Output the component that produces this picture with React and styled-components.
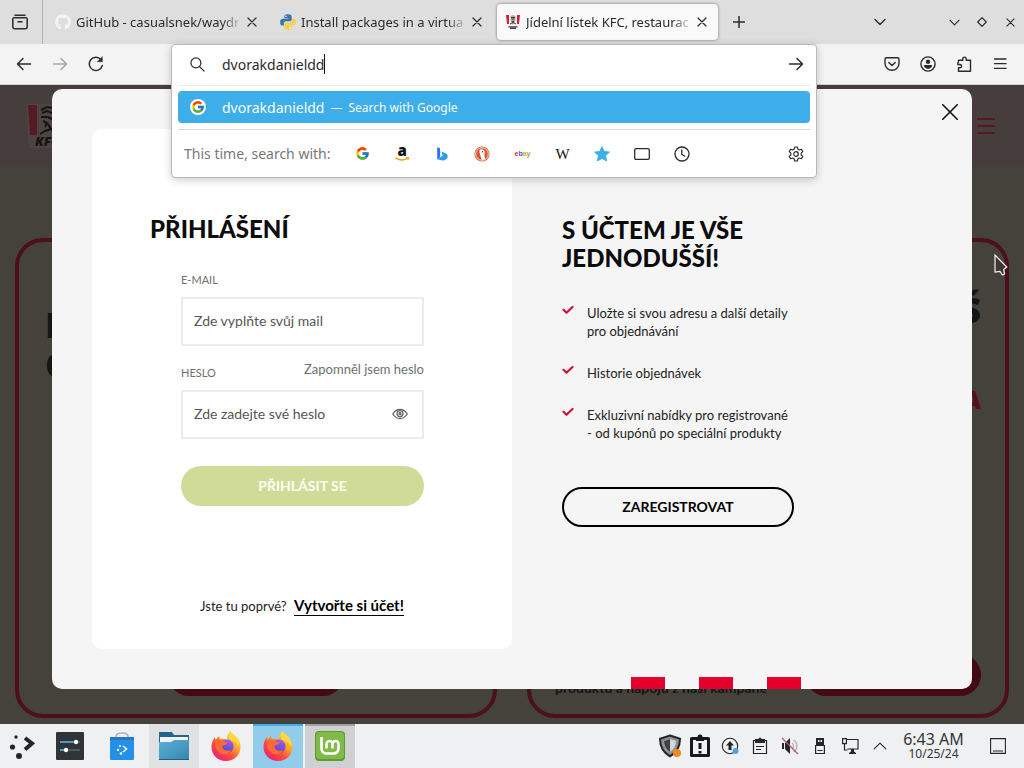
import React, { useState } from 'react'
import styled, { createGlobalStyle, css } from 'styled-components'
import { FaGithub } from 'react-icons/fa'
import { FcGoogle } from 'react-icons/fc'

const GlobalStyle = createGlobalStyle`
  * {
    box-sizing: border-box;
  }
  body {
    margin: 0;
    font-family: 'Noto Sans', 'Open Sans', sans-serif;
    font-size: 14px;
    color: #2b2b2f;
  }
  button,
  input {
    font: inherit;
    color: inherit;
  }
  button {
    padding: 0;
    border: none;
    background: transparent;
    cursor: pointer;
  }
  h1, h2, p, ul {
    margin: 0;
    padding: 0;
  }
  svg {
    display: block;
    flex: none;
  }
`

/* icons */

const Icon = ({ size = 16, box = 16, width = 1.3, children }) => (
  <svg
    width={size}
    height={size}
    viewBox={`0 0 ${box} ${box}`}
    fill="none"
    stroke="currentColor"
    strokeWidth={width}
    strokeLinecap="round"
    strokeLinejoin="round"
    aria-hidden="true"
  >
    {children}
  </svg>
)

const ViewIcon = () => (
  <Icon width={1.5}>
    <path d="M3 1.2h10" />
    <path d="M1.8 3.8h12.4M.8 4.5v8.3a2 2 0 0 0 2 2h10.4a2 2 0 0 0 2-2V4.5" />
    <path d="M6 7.8h4" />
  </Icon>
)

const CloseIcon = ({ size = 10, width = 1.2 }) => (
  <Icon size={size} box={10} width={width}>
    <path d="M1 1l8 8M9 1L1 9" />
  </Icon>
)

const PlusIcon = () => (
  <Icon size={12} box={12} width={1.5}>
    <path d="M6 .5v11M.5 6h11" />
  </Icon>
)

const ChevronIcon = ({ size = 12, up, width = 1.4 }) => (
  <Icon size={size} box={12} width={width}>
    <path d={up ? 'M1 8.5l5-5 5 5' : 'M1 3.5l5 5 5-5'} />
  </Icon>
)

const DiamondIcon = () => (
  <Icon size={10} box={10} width={1.2}>
    <path d="M5 .7L9.300 5 5 9.300.7 5z" />
  </Icon>
)

const ArrowIcon = ({ right }) => (
  <Icon width={1.5}>
    <path d={right ? 'M1.500 8h13M9 2.500L14.500 8 9 13.500' : 'M14.500 8h-13M7 2.500L1.500 8 7 13.500'} />
  </Icon>
)

const ReloadIcon = () => (
  <Icon width={1.5}>
    <path d="M14.300 9.500A6.600 6.600 0 1 1 13 3.700" />
    <path d="M14.300 1v4.700H9.600z" fill="currentColor" strokeWidth=".6" />
  </Icon>
)

const SearchIcon = () => (
  <Icon size={15}>
    <circle cx="6.3" cy="6.3" r="5.300" />
    <path d="M10.200 10.200l4.800 4.800" />
  </Icon>
)

const PocketIcon = () => (
  <Icon width={1.4}>
    <path d="M2.500 1.800h11A1.500 1.500 0 0 1 15 3.300v4a7 7 0 0 1-14 0v-4a1.500 1.500 0 0 1 1.500-1.500z" />
    <path d="M4.800 6.400L8 9.500l3.200-3.100" />
  </Icon>
)

const AccountIcon = () => (
  <Icon width={1.4}>
    <circle cx="8" cy="8" r="7.100" />
    <circle cx="8" cy="5.800" r="2.200" fill="currentColor" stroke="none" />
    <path d="M3.800 9h8.400c0 2.300-1.900 3.900-4.200 3.900S3.800 11.300 3.800 9z" fill="currentColor" stroke="none" />
  </Icon>
)

const PuzzleIcon = () => (
  <Icon width={1.4}>
    <path d="M2.500 6V4.300h4.300V2.800a1.700 1.700 0 0 1 3.400 0v1.500h4.300v10.900H2.500v-3.400h1.400a1.600 1.600 0 0 0 0-3.300H1.800V7" />
  </Icon>
)

const MenuIcon = () => (
  <Icon width={1.3}>
    <path d="M2.500 3h11.500M2.500 7.700h11.500M2.500 12.400h11.500" />
  </Icon>
)

const GearIcon = () => (
  <Icon width={1.2}>
    <path d="M6.700 1h2.600l.5 2.100 1.500.9 2.100-.7 1.300 2.300-1.500 1.500v1.800l1.500 1.500-1.300 2.300-2.100-.7-1.500.9-.5 2.100H6.700l-.5-2.100-1.500-.9-2.100.7-1.300-2.300 1.500-1.500V7.100L1.300 5.600l1.300-2.300 2.100.7 1.500-.9z" />
    <circle cx="8" cy="8" r="2.300" />
  </Icon>
)

const ClockIcon = () => (
  <Icon>
    <circle cx="8" cy="8" r="7" />
    <path d="M7.800 3.800V8.200l3 2" />
  </Icon>
)

const TabShapeIcon = () => (
  <Icon>
    <rect x=".7" y="2.600" width="14.600" height="10.800" rx="1.300" />
  </Icon>
)

const StarIcon = () => (
  <svg width="16" height="16" viewBox="0 0 16 16" aria-hidden="true">
    <path
      d="M8 .8l2.200 4.700 5.200.6-3.900 3.600 1.100 5.200L8 12.300l-4.600 2.600 1.100-5.200L.6 6.100l5.200-.6z"
      fill="#3daee9"
      stroke="#3daee9"
      strokeLinejoin="round"
    />
  </svg>
)

const PythonIcon = () => (
  <svg width="16" height="16" viewBox="0 0 16 16" aria-hidden="true">
    <path
      d="M7.900.2C4.700.2 4.300 1.600 4.300 2.400v1.800h3.800v.6H2.700C1 4.800.1 6.200.1 8.200s.9 3.400 2.300 3.400h1.500V9.500c0-1.300 1-2.200 2.300-2.200h3.600c1.100 0 1.900-.9 1.900-1.900v-3C11.700 1 10.300.2 7.900.2z"
      fill="#3d75a8"
    />
    <path
      d="M8.100 15.800c3.200 0 3.600-1.400 3.600-2.200v-1.800H7.900v-.6h5.400c1.700 0 2.600-1.400 2.600-3.400s-.9-3.400-2.300-3.400h-1.500v2.100c0 1.300-1 2.200-2.300 2.200H6.200c-1.100 0-1.900.9-1.900 1.900v3c0 1.400 1.400 2.200 3.800 2.200z"
      fill="#f5d04a"
    />
    <circle cx="6" cy="2.300" r=".8" fill="#fff" />
    <circle cx="10" cy="13.700" r=".8" fill="#fff" />
  </svg>
)

const KfcFavicon = () => (
  <svg width="16" height="16" viewBox="0 0 16 16" aria-hidden="true">
    <path d="M1 1h3v9H2zM12 1h3l-1 9h-2z" fill="#d2203c" />
    <path d="M5.500 2l2-1 3 1v4l-1 3-1.500 2-1.600-2-.9-3z" fill="#b3aaa6" />
    <path d="M6 3.500h4M6.500 5h3M7 7.500h2M5 10l3-1.500L11 10" stroke="#3a2d2d" strokeWidth=".9" fill="none" />
    <path d="M3.500 12.800h9M5 14.300h6" stroke="#4a3b3c" strokeWidth="1.200" />
  </svg>
)

const BingIcon = () => (
  <svg width="16" height="16" viewBox="0 0 16 16" aria-hidden="true">
    <path d="M3.200 1.300l2.900 1v8.800l-2.900 2.600z" fill="#2a72e8" />
    <path d="M7.300 5.300l5.100 2.500c1 .5 1.300 1.300 1.300 2.400-.1 2.200-2 4-4.200 4.200-1.700.2-4.600-.5-6.300-1.400l5.600-3.200z" fill="#2f9bf3" />
  </svg>
)

const DuckIcon = () => (
  <svg width="16" height="16" viewBox="0 0 16 16" aria-hidden="true">
    <circle cx="8" cy="8" r="7.600" fill="#d9562f" />
    <circle cx="8" cy="8" r="6.300" fill="none" stroke="#fff" strokeWidth=".8" />
    <path d="M6.200 3.400c2.700-.7 4.600.6 4.600 3.200 0 1-.4 1.700-.4 2.600l.8 4c-1.300.6-2.600.8-3.700.5L6 8c-.7-1.900-.9-3.500.2-4.600z" fill="#fff" />
    <circle cx="8.500" cy="5.800" r=".7" fill="#2d4f8e" />
    <path d="M9 7.500l3 .3-2.500 1z" fill="#f5b82e" />
  </svg>
)

const AmazonIcon = () => (
  <svg width="16" height="16" viewBox="0 0 16 16" aria-hidden="true">
    <text x="3.500" y="10" fontFamily="Open Sans, sans-serif" fontSize="15" fontWeight="800" fill="#111">
      a
    </text>
    <path d="M1.500 11.800c3.800 2.700 8.600 2.700 12 .6" stroke="#f19a1f" strokeWidth="1.500" fill="none" />
    <path d="M12 11.500h2.700l-.8 2.500" stroke="#f19a1f" fill="none" />
  </svg>
)

const EyeIcon = () => (
  <Icon size={16} width={1.300}>
    <path d="M.8 8C2.500 5 5 3.500 8 3.500S13.500 5 15.200 8c-1.700 3-4.200 4.500-7.200 4.500S2.500 11 .8 8z" />
    <circle cx="8" cy="7.600" r="3" />
    <circle cx="8" cy="7.600" r="1" fill="currentColor" />
  </Icon>
)

const CheckIcon = () => (
  <Icon size={12} box={12} width={2.200}>
    <path d="M1.500 5.800l3 2.900 6-5.700" />
  </Icon>
)

const DimLogo = () => (
  <svg width="60" height="44" viewBox="0 0 60 44" role="img" aria-label="KFC">
    <path d="M0 0h60l-3 44H3z" fill="#4c4543" />
    <path d="M2 1h9v30H4zM49 1h9l-2 30h-7z" fill="#571923" />
    <path
      d="M15 6l6-3 12 2M16 9l5-2 8 3M15 13h7l4 2M17 17l4 2-2 4M22 20l3 5M19 27l6-2 5 5M14 30l5-3"
      stroke="#171413"
      strokeWidth="2"
      fill="none"
    />
    <text x="9" y="42" fontFamily="Open Sans, sans-serif" fontStyle="italic" fontWeight="800" fontSize="13" fill="#171413">
      KFC
    </text>
  </svg>
)

const PointerIcon = () => (
  <svg width="14" height="22" viewBox="0 0 14 22" aria-hidden="true">
    <path d="M1 1v17l5-.5L8.500 21l2-1-.8-4.500L12.800 13z" fill="#3c3934" stroke="#f4f4f4" strokeWidth="1.200" />
  </svg>
)

const LauncherIcon = () => (
  <svg width="26" height="26" viewBox="0 0 26 26" aria-hidden="true">
    <circle cx="7" cy="4" r="1.700" fill="#232629" />
    <circle cx="3.500" cy="14" r="2.600" fill="#232629" />
    <circle cx="10" cy="23" r="3" fill="#232629" />
    <path d="M16 5l7 5.500-7 6" stroke="#232629" strokeWidth="4" fill="none" />
  </svg>
)

const SettingsAppIcon = () => (
  <svg width="28" height="28" viewBox="0 0 28 28" aria-hidden="true">
    <rect width="28" height="28" rx="1" fill="#2f3439" />
    <path d="M4 10h20M4 18h20" stroke="#56616a" strokeWidth="1.500" />
    <path d="M4 10h15M4 18h5" stroke="#4fb1dc" strokeWidth="1.500" />
    <circle cx="20" cy="10" r="2.200" fill="#fff" />
    <circle cx="10" cy="18" r="2.200" fill="#fff" />
  </svg>
)

const StoreIcon = () => (
  <svg width="26" height="28" viewBox="0 0 26 28" aria-hidden="true">
    <path d="M7 8V4.500C7 2 9 1 13 1s6 1 6 3.500V8" stroke="#a7b4bd" strokeWidth="1.500" fill="none" />
    <path d="M1 5h24v22a1 1 0 0 1-1 1H2a1 1 0 0 1-1-1z" fill="#2490ea" />
    <path d="M1 5h24v3H1z" fill="#2378c4" />
    <circle cx="11" cy="14" r="1" fill="#fff" />
    <circle cx="9" cy="18" r="1.200" fill="#fff" />
    <circle cx="12" cy="21.500" r="1.300" fill="#fff" />
    <path d="M14 14l3.500 3-3.500 3" stroke="#fff" strokeWidth="1.600" fill="none" />
  </svg>
)

const FolderIcon = () => (
  <svg width="30" height="28" viewBox="0 0 30 28" aria-hidden="true">
    <defs>
      <linearGradient id="folder" x1="0" y1="0" x2="1" y2="1">
        <stop offset="0" stopColor="#5fb0d5" />
        <stop offset="1" stopColor="#3487b0" />
      </linearGradient>
    </defs>
    <path d="M0 0h13l2 3h15v10H0z" fill="#22678a" />
    <path d="M1 5h28v6H1z" fill="#f3f3f3" />
    <path d="M0 10h12l3-2h15v19H0z" fill="url(#folder)" />
    <path d="M0 27h30v1H0z" fill="#1f5f80" />
  </svg>
)

const FirefoxIcon = ({ id }) => (
  <svg width="32" height="32" viewBox="0 0 32 32" aria-hidden="true">
    <defs>
      <linearGradient id={`${id}-fire`} x1=".85" y1=".1" x2=".2" y2=".95">
        <stop offset="0" stopColor="#ffe14a" />
        <stop offset=".35" stopColor="#ffa12b" />
        <stop offset=".65" stopColor="#ff4b3e" />
        <stop offset="1" stopColor="#e5217a" />
      </linearGradient>
      <linearGradient id={`${id}-orb`} x1=".7" y1="0" x2=".3" y2="1">
        <stop offset="0" stopColor="#a25bf0" />
        <stop offset="1" stopColor="#4c45c4" />
      </linearGradient>
    </defs>
    <path
      d="M20.500 1c1 2.400 4 4 5.800 6 3 3.200 4.400 6.700 4.200 10.500C30.100 25.400 24 31 16 31S1.500 25 1.500 17c0-4 1.200-6.600 3.300-10l.8 2.800L9 6l1 3.200c3-.8 5.300-.5 7 .8C17 6.500 18 3 20.500 1z"
      fill={`url(#${id}-fire)`}
    />
    <circle cx="16.500" cy="16.500" r="7" fill={`url(#${id}-orb)`} />
    <path d="M5 12c3-2.300 6-2.600 9.500-.5 1 .6 2.200.8 3.500.8-.7 1.600-2 2.500-4 2.700-1.600.2-2 1.400-1.300 3 1.300 2.600 5 3.600 8.500 1.700-1.400 4.600-8 6.500-12.500 2.300C5.800 19.300 4.500 16 5 12z" fill="#ff6a32" />
    <path d="M20.500 1c1 2.400 4 4 5.800 6 2.600 3 3.300 6 2.500 9.500C27 11 23 12 19.500 9c-1.500-2.500-.5-6 1-8z" fill="#ffd83d" />
  </svg>
)

const MintIcon = () => (
  <svg width="30" height="30" viewBox="0 0 30 30" aria-hidden="true">
    <rect width="30" height="30" rx="4" fill="#5f9c35" />
    <rect x="1" y="1" width="28" height="27" rx="4" fill="#82ba4a" />
    <path
      d="M6.500 6v11.500a5 5 0 0 0 5 5h7a5 5 0 0 0 5-5V13a3 3 0 0 0-6 0v4.500M17.500 13a3 3 0 0 0-6 0v4.500"
      stroke="#fff"
      strokeWidth="2.600"
      fill="none"
    />
  </svg>
)

const ShieldIcon = () => (
  <svg width="24" height="24" viewBox="0 0 24 24" aria-hidden="true">
    <path d="M12 1.500l10 3.300c0 8-3 13.500-10 17.500C5 18.300 2 12.800 2 4.800z" fill="#8d9193" stroke="#232629" strokeWidth="2" />
    <path d="M12 5l6 2c-.3 5-2 8-6 11-4-3-5.700-6-6-11z" fill="#d5d5d5" />
    <path d="M12 5v13c-4-3-5.700-6-6-11z" fill="#3e4245" />
    <circle cx="19" cy="19" r="4" fill="#f08a1c" />
  </svg>
)

const AlertBoardIcon = () => (
  <svg width="22" height="24" viewBox="0 0 22 24" aria-hidden="true">
    <path d="M2.500 4.500h17v17h-17z" fill="none" stroke="#17191b" strokeWidth="3" strokeLinejoin="round" />
    <path d="M7 3.500h8V7H7z" fill="#17191b" />
    <circle cx="11" cy="3" r="2.500" fill="#17191b" />
    <path d="M11 9v6M11 17v2.500" stroke="#17191b" strokeWidth="3" />
  </svg>
)

const UpdateIcon = () => (
  <svg width="18" height="18" viewBox="0 0 18 18" aria-hidden="true">
    <circle cx="9" cy="9" r="7.700" fill="none" stroke="#232629" strokeWidth="1.100" />
    <path d="M9 4l4 4.500h-2.500V13h-3V8.500H5z" fill="#232629" />
    <circle cx="14.500" cy="14" r="3" fill="#4aa3e6" />
  </svg>
)

const ClipboardIcon = () => (
  <svg width="16" height="18" viewBox="0 0 16 18" aria-hidden="true">
    <path d="M1.500 3.500h13v13h-13z" fill="none" stroke="#232629" strokeWidth="1.200" />
    <path d="M3 2h3.500a1.500 1.500 0 0 1 3 0H13v4H3z" fill="#232629" />
    <path d="M4 9.500h8M4 12.500h5" stroke="#232629" strokeWidth="1.200" />
  </svg>
)

const MutedIcon = () => (
  <svg width="18" height="18" viewBox="0 0 18 18" aria-hidden="true">
    <path d="M1 6h2v6H1zM4 6l5-5v16l-5-5z" fill="#232629" />
    <path d="M11 6c2 1.500 2 4.500 0 6M12.500 3c4.500 2.500 4.500 9.500 0 12" stroke="#a9abac" strokeWidth="1.200" fill="none" />
    <path d="M1 1l16 16" stroke="#b65a66" strokeWidth="1.200" />
  </svg>
)

const UsbIcon = () => (
  <svg width="12" height="18" viewBox="0 0 12 18" aria-hidden="true">
    <path d="M2 1h8v7H2z" fill="#232629" />
    <path d="M4 3h1.500v2H4zM6.500 3H8v2H6.500z" fill="#eff0f1" />
    <path d="M1.600 8.500h8.800v8H1.600zM3.500 13.500h5" fill="none" stroke="#232629" strokeWidth="1.200" />
  </svg>
)

const NetworkIcon = () => (
  <svg width="18" height="18" viewBox="0 0 18 18" aria-hidden="true">
    <path d="M6 2.500h11v9.500H6.500" fill="none" stroke="#232629" strokeWidth="1.200" />
    <path d="M1.600 1.600h3.800v5H1.600zM3.500 6.600V13h3" fill="none" stroke="#232629" strokeWidth="1.200" />
    <path d="M10 12h3v2.500l2 1.500v1H8v-1l2-1.500z" fill="#232629" />
  </svg>
)

const DesktopIcon = () => (
  <svg width="16" height="16" viewBox="0 0 16 16" aria-hidden="true">
    <path d="M.6.6h14.800v14.800H.6zM3 13h10" fill="none" stroke="#232629" strokeWidth="1.100" />
  </svg>
)

/* data */

const TABS = [
  { title: 'GitHub - casualsnek/waydr', icon: <FaGithub size={16} color="#f4f4f4" /> },
  { title: 'Install packages in a virtua', icon: <PythonIcon /> },
  { title: 'Jídelní lístek KFC, restaurac', icon: <KfcFavicon />, active: true }
]

const ENGINES = [
  { name: 'Google', icon: <FcGoogle size={15} /> },
  { name: 'Amazon', icon: <AmazonIcon /> },
  { name: 'Bing', icon: <BingIcon /> },
  { name: 'DuckDuckGo', icon: <DuckIcon /> },
  { name: 'eBay', ebay: true },
  { name: 'Wikipedia', wiki: true },
  { name: 'Bookmarks', icon: <StarIcon /> },
  { name: 'Tabs', icon: <TabShapeIcon /> },
  { name: 'History', icon: <ClockIcon /> }
]

const BENEFITS = [
  'Uložte si svou adresu a další detaily pro objednávání',
  'Historie objednávek',
  'Exkluzivní nabídky pro registrované - od kupónů po speciální produkty'
]

const TASKS = [
  { name: 'System Settings', icon: <SettingsAppIcon /> },
  { name: 'Discover', icon: <StoreIcon /> },
  { name: 'Files', icon: <FolderIcon />, state: 'open' },
  { name: 'Firefox', icon: <FirefoxIcon id="ff" /> },
  { name: 'Firefox window', icon: <FirefoxIcon id="ffw" />, state: 'active' },
  { name: 'Mint', icon: <MintIcon />, state: 'running' }
]

const TRAY = [
  { name: 'Firewall', icon: <ShieldIcon /> },
  { name: 'Reports', icon: <AlertBoardIcon /> },
  { name: 'Updates', icon: <UpdateIcon /> },
  { name: 'Clipboard', icon: <ClipboardIcon /> },
  { name: 'Volume', icon: <MutedIcon /> },
  { name: 'Devices', icon: <UsbIcon /> },
  { name: 'Network', icon: <NetworkIcon /> },
  { name: 'More', icon: <ChevronIcon size={14} up width={1} /> }
]

const App = () => {
  const [query, setQuery] = useState('dvorakdanieldd')
  const [showPassword, setShowPassword] = useState(false)

  return (
    <Screen>
      <GlobalStyle />
      <TabBar>
        <ViewButton aria-label="Firefox View">
          <ViewIcon />
        </ViewButton>
        <Tabs>
          {TABS.map(tab => (
            <Tab key={tab.title} $active={tab.active}>
              {tab.icon}
              <TabTitle>{tab.title}</TabTitle>
              <TabClose aria-label="Close tab">
                <CloseIcon />
              </TabClose>
            </Tab>
          ))}
          <NewTab aria-label="New tab">
            <PlusIcon />
          </NewTab>
        </Tabs>
        <ListTabs aria-label="List all tabs">
          <ChevronIcon />
        </ListTabs>
        <WindowButton aria-label="Minimize">
          <ChevronIcon size={11} width={1.2} />
        </WindowButton>
        <WindowButton aria-label="Maximize">
          <DiamondIcon />
        </WindowButton>
        <WindowButton aria-label="Close window">
          <CloseIcon size={9} />
        </WindowButton>
      </TabBar>

      <Toolbar>
        <NavGroup>
          <ToolButton aria-label="Back">
            <ArrowIcon />
          </ToolButton>
          <ToolButton aria-label="Forward" disabled>
            <ArrowIcon right />
          </ToolButton>
          <ToolButton aria-label="Reload">
            <ReloadIcon />
          </ToolButton>
        </NavGroup>
        <UrlBar>
          <UrlPanel>
            <UrlRow>
              <SearchIcon />
              <UrlField>
                <UrlInput
                  aria-label="Search or enter address"
                  value={query}
                  onChange={e => setQuery(e.target.value)}
                />
                <Caret />
              </UrlField>
              <ArrowIcon right />
            </UrlRow>
            <Results>
              <Result>
                <ResultLogo>
                  <FcGoogle size={14} />
                </ResultLogo>
                <span>{query}</span>
                <ResultHint>—</ResultHint>
                <ResultHint>Search with Google</ResultHint>
              </Result>
            </Results>
            <Engines>
              <EnginesLabel>This time, search with:</EnginesLabel>
              {ENGINES.map(engine => (
                <Engine key={engine.name} aria-label={engine.name}>
                  {engine.icon}
                  {engine.ebay && (
                    <Ebay>
                      <b>e</b>
                      <b>b</b>
                      <b>a</b>
                      <b>y</b>
                    </Ebay>
                  )}
                  {engine.wiki && <Wiki>W</Wiki>}
                </Engine>
              ))}
              <EngineSettings aria-label="Search settings">
                <GearIcon />
              </EngineSettings>
            </Engines>
          </UrlPanel>
        </UrlBar>
        <ActionGroup>
          <ToolButton aria-label="Save to Pocket">
            <PocketIcon />
          </ToolButton>
          <ToolButton aria-label="Account">
            <AccountIcon />
          </ToolButton>
          <ToolButton aria-label="Extensions">
            <PuzzleIcon />
          </ToolButton>
          <ToolButton aria-label="Menu">
            <MenuIcon />
          </ToolButton>
        </ActionGroup>
      </Toolbar>

      <Viewport>
        <Backdrop aria-hidden="true">
          <SiteHeader>
            <DimLogo />
            <Burger>
              <i />
              <i />
              <i />
            </Burger>
          </SiteHeader>
          <Promos>
            <Promo>
              <PromoTitle>
                K<br />O
              </PromoTitle>
              <PromoFooter $center>
                <PromoPill />
              </PromoFooter>
            </Promo>
            <Promo $right>
              <PromoTitle>Š</PromoTitle>
              <PromoPrice>A</PromoPrice>
              <PromoFooter>
                <PromoNote>produktů a nápojů z naší kampaně</PromoNote>
                <PromoPill />
              </PromoFooter>
            </Promo>
          </Promos>
        </Backdrop>

        <Modal role="dialog" aria-label="Přihlášení">
          <LoginCard onSubmit={e => e.preventDefault()}>
            <Title as="h1">PŘIHLÁŠENÍ</Title>
            <Fields>
              <LabelRow>
                <Label htmlFor="email">E-MAIL</Label>
              </LabelRow>
              <Field>
                <Input id="email" type="email" placeholder="Zde vyplňte svůj mail" />
              </Field>
              <LabelRow $short>
                <Label htmlFor="password">HESLO</Label>
                <Forgot href="#heslo">Zapomněl jsem heslo</Forgot>
              </LabelRow>
              <Field>
                <Input
                  id="password"
                  type={showPassword ? 'text' : 'password'}
                  placeholder="Zde zadejte své heslo"
                />
                <EyeButton
                  type="button"
                  aria-label="Zobrazit heslo"
                  onClick={() => setShowPassword(!showPassword)}
                >
                  <EyeIcon />
                </EyeButton>
              </Field>
              <Submit type="submit">PŘIHLÁSIT SE</Submit>
            </Fields>
            <FirstTime>
              Jste tu poprvé? <CreateLink href="#ucet">Vytvořte si účet!</CreateLink>
            </FirstTime>
          </LoginCard>

          <Aside>
            <Title>
              S ÚČTEM JE VŠE
              <br />
              JEDNODUŠŠÍ!
            </Title>
            <Benefits>
              {BENEFITS.map(text => (
                <Benefit key={text}>
                  <CheckIcon />
                  <span>{text}</span>
                </Benefit>
              ))}
            </Benefits>
            <Register type="button">ZAREGISTROVAT</Register>
            <Stripes>
              <i />
              <i />
              <i />
            </Stripes>
          </Aside>

          <ModalClose aria-label="Zavřít">
            <CloseIcon size={18} width={0.9} />
          </ModalClose>
        </Modal>
        <Pointer>
          <PointerIcon />
        </Pointer>
      </Viewport>

      <Taskbar>
        <Launcher aria-label="Application launcher">
          <LauncherIcon />
        </Launcher>
        {TASKS.map(task => (
          <Task key={task.name} aria-label={task.name} $state={task.state}>
            {task.icon}
          </Task>
        ))}
        <Tray>
          {TRAY.map(item => (
            <TrayButton key={item.name} aria-label={item.name}>
              {item.icon}
            </TrayButton>
          ))}
        </Tray>
        <Clock>
          <Time>6:43 AM</Time>
          <DateText>10/25/24</DateText>
        </Clock>
        <ShowDesktop aria-label="Show desktop">
          <DesktopIcon />
        </ShowDesktop>
      </Taskbar>
    </Screen>
  )
}

const centered = css`
  display: flex;
  align-items: center;
  justify-content: center;
`

const Screen = styled.div`
  display: flex;
  flex-direction: column;
  min-height: 100vh;
`

const TabBar = styled.header`
  display: flex;
  align-items: center;
  height: 44px;
  background: #dedede;
`

const ViewButton = styled.button`
  ${centered}
  flex: none;
  width: 43px;
  height: 44px;
  padding-right: 2px;
  border-right: 1px solid #b4b4b6;
`

const Tabs = styled.div`
  display: flex;
  align-items: center;
  flex: 1;
  gap: 4px;
  min-width: 0;
  padding-left: 4px;
`

const Tab = styled.div`
  display: flex;
  align-items: center;
  flex: 0 1 221px;
  min-width: 0;
  height: 36px;
  padding: 0 9px 0 8px;
  border-radius: 4px;
  ${props =>
    props.$active &&
    css`
      background: #f9f9fa;
      box-shadow: 0 0 3px rgba(0, 0, 0, 0.5);
    `}
`

const TabTitle = styled.span`
  flex: 1;
  min-width: 0;
  margin-left: 5px;
  overflow: hidden;
  white-space: nowrap;
  font-size: 13px;
  line-height: 20px;
  mask-image: linear-gradient(to right, #000 calc(100% - 20px), transparent);
`

const TabClose = styled.button`
  ${centered}
  width: 14px;
  height: 20px;
  margin-left: 3px;
`

const NewTab = styled.button`
  ${centered}
  width: 34px;
  height: 34px;
`

const WindowButton = styled.button`
  ${centered}
  flex: none;
  width: 28px;
  height: 28px;
`

const ListTabs = styled(WindowButton)`
  margin-right: 46px;
`

const Toolbar = styled.div`
  display: flex;
  height: 41px;
  background: #f3f3f4;
  border-bottom: 1px solid #d4d4d4;
`

const NavGroup = styled.div`
  display: flex;
  align-items: center;
  flex: none;
  width: 171px;
  padding-left: 6px;
`

const ToolButton = styled.button`
  ${centered}
  width: 36px;
  height: 32px;
  &:disabled {
    color: #a5a5a8;
  }
`

const ActionGroup = styled(NavGroup)`
  justify-content: flex-end;
  width: 207px;
  padding: 0 6px 0 0;
`

const UrlBar = styled.div`
  position: relative;
  flex: 1;
  min-width: 0;
`

/* opens over the page, so it leaves the toolbar's flow */
const UrlPanel = styled.div`
  position: absolute;
  top: 0;
  left: 0;
  right: 0;
  z-index: 10;
  background: #fff;
  border: 1px solid #b9b9bb;
  border-radius: 4px;
  box-shadow: 0 2px 8px rgba(0, 0, 0, 0.2);
`

const UrlRow = styled.div`
  display: flex;
  align-items: center;
  height: 40px;
  padding: 0 12px 2px 18px;
`

const UrlField = styled.div`
  display: flex;
  align-items: center;
  flex: 1;
  min-width: 0;
  margin-left: 17px;
`

const UrlInput = styled.input`
  field-sizing: content;
  min-width: 0;
  max-width: 100%;
  padding: 0;
  border: none;
  outline: none;
  background: transparent;
`

const Caret = styled.span`
  width: 1px;
  height: 20px;
  background: #111;
`

const Results = styled.div`
  margin: 0 6px;
  padding: 5px 0 6px;
  border-top: 1px solid #ececec;
  border-bottom: 1px solid #d8d8da;
`

const Result = styled.div`
  display: flex;
  align-items: center;
  height: 32px;
  padding-left: 12px;
  border-radius: 4px;
  background: #3daee9;
  color: #f6fcff;
`

const ResultLogo = styled.span`
  ${centered}
  width: 16px;
  height: 16px;
  margin-right: 16px;
  border-radius: 50%;
  background: #fff;
`

const ResultHint = styled.span`
  margin-left: 6px;
  font-size: 12px;
`

const Engines = styled.div`
  display: flex;
  align-items: center;
  height: 47px;
  padding: 0 2px 0 12px;
`

const EnginesLabel = styled.span`
  margin-right: 12px;
  color: #77777b;
  white-space: nowrap;
`

const Engine = styled.button`
  ${centered}
  width: 40px;
  height: 32px;
`

const EngineSettings = styled.button`
  ${centered}
  width: 36px;
  height: 32px;
  margin-left: auto;
`

const Ebay = styled.span`
  font: 7px/16px 'Liberation Sans', Arial, sans-serif;
  b:nth-child(1) {
    color: #d8333a;
  }
  b:nth-child(2) {
    color: #2b5fd0;
  }
  b:nth-child(3) {
    color: #dca62a;
  }
  b:nth-child(4) {
    color: #8cb23a;
  }
`

const Wiki = styled.span`
  font: 15px/16px 'Liberation Serif', 'Times New Roman', serif;
  color: #111;
`

const Viewport = styled.main`
  position: relative;
  display: grid;
  flex: 1;
  overflow: hidden;
  font-family: Lato, 'Open Sans', sans-serif;
  background: #45423b;
  & > * {
    grid-area: 1 / 1;
  }
`

const Backdrop = styled.div`
  display: flex;
  flex-direction: column;
`

const SiteHeader = styled.div`
  display: flex;
  align-items: center;
  justify-content: space-between;
  height: 82px;
  padding: 0 29px 0 26px;
  background: #463e3d;
`

const Burger = styled.div`
  display: flex;
  flex-direction: column;
  gap: 5px;
  width: 18px;
  i {
    height: 2px;
    background: #5c1622;
  }
`

const Promos = styled.div`
  display: grid;
  grid-template-columns: 1fr 1fr;
  gap: 30px;
  flex: 1;
  padding: 71px 15px 6px;
`

const Promo = styled.div`
  display: flex;
  flex-direction: column;
  padding: ${props => (props.$right ? '48px 24px 18px' : '63px 26px 18px')};
  border: 4px solid #4d0f1b;
  border-radius: 28px;
  text-align: ${props => (props.$right ? 'right' : 'left')};
`

const PromoTitle = styled.p`
  font: 800 36px/40px 'Open Sans', sans-serif;
  color: #151513;
`

const PromoPrice = styled.p`
  margin-top: 58px;
  font: 800 24px/24px 'Open Sans', sans-serif;
  color: #5a0f1d;
`

const PromoFooter = styled.div`
  display: flex;
  align-items: flex-end;
  justify-content: ${props => (props.$center ? 'center' : 'space-between')};
  margin-top: auto;
`

const PromoPill = styled.div`
  width: 176px;
  height: 42px;
  border-radius: 21px;
  background: #430914;
`

const PromoNote = styled.p`
  font-size: 14px;
  line-height: 16px;
  font-weight: 700;
  color: #151513;
`

const Modal = styled.section`
  position: relative;
  display: grid;
  grid-template-columns: 35fr 34fr;
  align-self: start;
  min-height: 600px;
  margin: 4px 52px 35px;
  padding: 0 52px 0 40px;
  border-radius: 10px;
  background: #f5f5f5;
  color: #222;
`

const LoginCard = styled.form`
  display: flex;
  flex-direction: column;
  min-height: 520px;
  margin: 40px 0;
  padding: 86px 58px 33px;
  border-radius: 10px;
  background: #fff;
`

const Title = styled.h2`
  font-size: 24px;
  line-height: 28px;
  font-weight: 900;
  color: #0c0c0c;
`

const Fields = styled.div`
  display: flex;
  flex-direction: column;
  padding: 0 30px 0 31px;
`

const LabelRow = styled.div`
  display: flex;
  align-items: flex-end;
  justify-content: space-between;
  height: ${props => (props.$short ? '44px' : '54px')};
  padding-bottom: 9px;
`

const Label = styled.label`
  font-size: 11px;
  line-height: 16px;
  color: #6f6f6f;
`

const Forgot = styled.a`
  font-size: 13px;
  line-height: 24px;
  color: #6f6f6f;
  text-decoration: none;
`

const Field = styled.div`
  display: flex;
  align-items: center;
  height: 49px;
  padding: 0 14px 2px 11px;
  border: 2px solid #ececec;
`

const Input = styled.input`
  flex: 1;
  min-width: 0;
  padding: 0;
  border: none;
  outline: none;
  background: transparent;
  font-size: 14px;
  &::placeholder {
    color: #555;
    opacity: 1;
  }
`

const EyeButton = styled.button`
  color: #666;
`

const Submit = styled.button`
  height: 40px;
  margin-top: 27px;
  padding-bottom: 2px;
  border-radius: 20px;
  background: #d1db98;
  color: #fdfef6;
  font-size: 14px;
  font-weight: 700;
`

const FirstTime = styled.p`
  margin-top: auto;
  font-size: 13px;
  line-height: 20px;
  text-align: center;
  white-space: nowrap;
`

const CreateLink = styled.a`
  display: inline-block;
  margin-left: 4px;
  border-bottom: 1px solid #000;
  color: #000;
  font-size: 15px;
  font-weight: 700;
  text-decoration: none;
`

const Aside = styled.div`
  display: flex;
  flex-direction: column;
  align-items: flex-start;
  padding: 127px 0 0 50px;
`

const Benefits = styled.ul`
  display: flex;
  flex-direction: column;
  gap: 24px;
  width: 232px;
  margin-top: 32px;
  list-style: none;
`

const Benefit = styled.li`
  display: flex;
  gap: 13px;
  font-size: 13px;
  line-height: 18px;
  svg {
    color: #d0103a;
  }
`

const Register = styled.button`
  width: 232px;
  height: 40px;
  margin-top: 45px;
  padding-bottom: 2px;
  border: 2px solid #000;
  border-radius: 20px;
  color: #000;
  font-size: 14px;
  font-weight: 700;
`

const Stripes = styled.div`
  display: flex;
  align-self: center;
  gap: 34px;
  margin: auto 50px 0 0;
  i {
    width: 34px;
    height: 12px;
    background: #e4002b;
  }
`

const ModalClose = styled.button`
  ${centered}
  position: absolute;
  top: 12px;
  right: 11px;
  width: 22px;
  height: 22px;
  color: #111;
`

const Pointer = styled.div`
  position: absolute;
  top: 169px;
  right: 16px;
`

const Taskbar = styled.footer`
  display: flex;
  align-items: center;
  height: 44px;
  background: #eff0f1;
`

const Launcher = styled.button`
  ${centered}
  width: 44px;
  height: 44px;
`

const TASK_COLORS = {
  open: ['#e0e1e2', '#e0e1e2'],
  active: ['#93cbea', '#3daee9'],
  running: ['#cfd0d1', '#9fa0a1']
}

const Task = styled.button`
  ${centered}
  width: 50px;
  height: 44px;
  margin: 0 1px;
  ${props =>
    props.$state &&
    css`
      background: ${TASK_COLORS[props.$state][0]};
      box-shadow: inset 0 2px ${TASK_COLORS[props.$state][1]};
    `}
`

const Tray = styled.div`
  display: flex;
  margin-left: auto;
`

const TrayButton = styled.button`
  ${centered}
  width: 30px;
  height: 44px;
`

const Clock = styled.div`
  width: 77px;
  padding-bottom: 1px;
  text-align: center;
  white-space: nowrap;
  color: #33373a;
`

const Time = styled.div`
  font-size: 16px;
  line-height: 16px;
`

const DateText = styled.div`
  font-size: 12px;
  line-height: 14px;
`

const ShowDesktop = styled.button`
  ${centered}
  width: 52px;
  height: 44px;
`

export default App
